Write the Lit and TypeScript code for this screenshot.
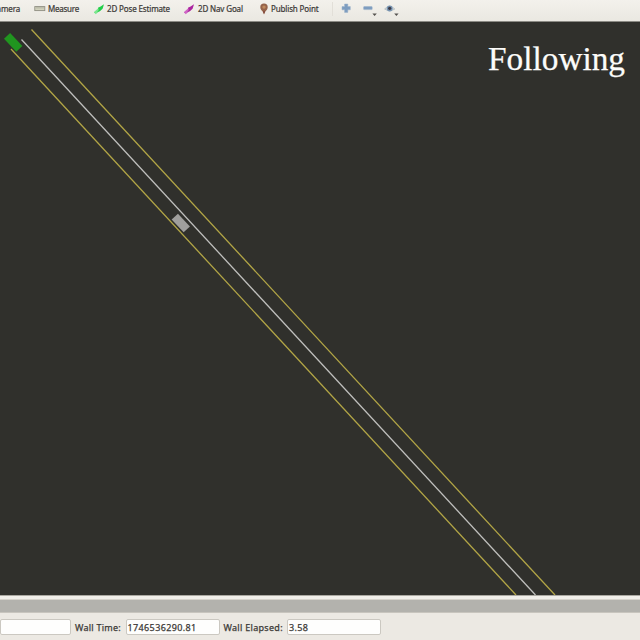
import { LitElement, html, css, svg } from "lit";
import { customElement } from "lit/decorators.js";

const arrow = (color: string, light: string) => html`<svg width="12" height="12" viewBox="0 0 12 12">
  <path d="M.8 10.2 L6 5.6" stroke=${light} stroke-width="2.8"/>
  <path d="M10 1.2 L8.6 5.8 L5.8 8.2 L3 9.2 L4.8 7 L4 4.8 L6.6 3.6 Z" fill=${color}/>
</svg>`;

const ruler = html`<svg width="12" height="12" viewBox="0 0 12 12">
  <rect x=".8" y="3.6" width="10" height="4" fill="#d2d3bd" stroke="#8f8e82" stroke-width=".9"/>
  <path d="M3 3.6v2M5 3.6v2M7 3.6v2M9 3.6v2" stroke="#96958a" stroke-width=".6"/>
</svg>`;

const pin = html`<svg width="9" height="12" viewBox="0 0 9 12">
  <path d="M4 11.5 L2.5 8.2 C.9 6.9 .3 5.7 .3 4.1 A3.7 3.7 0 0 1 7.7 4.1 C7.7 5.7 7.1 6.9 5.5 8.2 Z" fill="#95634a"/>
  <circle cx="4" cy="4.1" r="1.7" fill="#c08a5e"/>
  <path d="M3.2 8.2h1.6l-.8 2.9z" fill="#7c3936"/>
</svg>`;

@customElement("app-root")
export class AppRoot extends LitElement {
  static styles = css`
    :host {
      display: flex;
      flex-direction: column;
      width: 640px;
      height: 640px;
      overflow: hidden;
      background: #ece9e3;
      color: #3b3936;
      font-family: "Noto Sans", "Open Sans", sans-serif;
    }
    svg { display: block; flex: none; }
    .toolbar {
      display: flex;
      align-items: center;
      height: 22px;
      box-sizing: border-box;
      padding-bottom: 4px;
      flex: none;
      background: linear-gradient(#f3f1ec, #eae8e1);
      border-bottom: 1px solid #8b8a84;
      font-size: 8px;
      -webkit-text-stroke: 0.2px currentColor;
      white-space: nowrap;
    }
    .label { flex: none; line-height: 12px; letter-spacing: -0.14px; }
    .camera { display: flex; justify-content: flex-end; width: 20px; margin-right: 14px; }
    .measure { width: 46px; margin-left: 2px; letter-spacing: -0.25px; }
    .pose { width: 77px; margin-left: 1px; }
    .nav { width: 62px; margin-left: 2px; }
    .point { width: 61px; margin-left: 2px; }
    .divider { width: 1px; height: 14px; background: #e2dfd8; }
    .tools { display: flex; align-items: center; margin-left: 6px; }
    .view {
      position: relative;
      height: 573px;
      flex: none;
      background: #30302c;
      overflow: hidden;
    }
    .status {
      position: absolute;
      top: 15px;
      right: 15px;
      color: #fcfcfa;
      font: 33.3px/44px "Liberation Serif", serif;
      -webkit-text-stroke: 0.25px currentColor;
    }
    .edge { height: 5px; flex: none; background: linear-gradient(#aaa8a1 0 1px, #f0eee9 1px 4px, #d6d3cc 4px); }
    .dock { height: 13px; flex: none; background: #b3b2ad; border-bottom: 1px solid #c8c5be; box-sizing: border-box; }
    .time {
      display: flex;
      flex: none;
      padding-top: 6px;
      font-size: 9px;
      -webkit-text-stroke: 0.25px currentColor;
      line-height: 15px;
      white-space: nowrap;
    }
    .field {
      box-sizing: border-box;
      width: 94px;
      height: 16px;
      border: 1px solid #cbc8c1;
      border-radius: 2px;
      background: #fefefd;
      padding-left: 1px;
      line-height: 15px;
      letter-spacing: 0.38px;
    }
    .first { width: 71px; }
    .wall { width: 50.5px; padding-left: 4px; padding-top: 1px; letter-spacing: 0.25px; }
    .elapsed { width: 63.5px; padding-left: 4px; padding-top: 1px; letter-spacing: 0.3px; }
  `;

  render() {
    return html`
      <div class="toolbar">
        <div class="label camera">amera</div>
        ${ruler}<div class="label measure">Measure</div>
        ${arrow("#21ce48", "#7be68e")}<div class="label pose">2D Pose Estimate</div>
        ${arrow("#ab249f", "#cf66c5")}<div class="label nav">2D Nav Goal</div>
        ${pin}<div class="label point">Publish Point</div>
        <div class="divider"></div>
        <div class="tools">
          <svg width="70" height="17" viewBox="0 0 70 17">
            <path d="M3 6.6h2.6V4h3.2v2.6h2.5v3.2H8.8v2.6H5.6V9.8H3z" fill="#7d9dc0" stroke="#9ab0c9" stroke-width=".5"/>
            <rect x="24.6" y="6.6" width="8.6" height="3" rx=".5" fill="#7d9dc0" stroke="#9ab0c9" stroke-width=".5"/>
            <path d="M33.4 13.5h4.4l-2.2 2.6zM55.2 13.5h4.4l-2.2 2.6z" fill="#55534f"/>
            <path d="M45.6 9Q50.7 3.4 55.8 9Q50.7 12.6 45.6 9z" fill="#cbd6df" stroke="#aeb7b9" stroke-width=".7"/>
            <circle cx="50.7" cy="8.5" r="2.9" fill="#7793b1"/>
            <circle cx="50.7" cy="8.3" r="1.6" fill="#3a3b48"/>
          </svg>
        </div>
      </div>
      <div class="view">
        <svg width="640" height="573" viewBox="0 22 640 573">
          ${[
            ["M31.5 29.5L555 595", "#b3a646"],
            ["M21.5 39.5L535.5 595", "#c0c0be"],
            ["M11 49L516 595", "#b3a646"],
          ].map(([d, c]) => svg`<path d=${d} stroke=${c} stroke-width="1.3" fill="none"/>`)}
          <rect x="-9" y="-4.2" width="18" height="8.4" fill="#20951f" transform="translate(13.2 42.4) rotate(47)"/>
          <rect x="-8.8" y="-4.3" width="17.6" height="8.6" fill="#a09f9d" transform="translate(180.8 223) rotate(47)"/>
        </svg>
        <div class="status">Following</div>
      </div>
      <div class="edge"></div>
      <div class="dock"></div>
      <div class="time">
        <div class="field first"></div>
        <div class="wall">Wall Time:</div>
        <div class="field">1746536290.81</div>
        <div class="elapsed">Wall Elapsed:</div>
        <div class="field">3.58</div>
      </div>
    `;
  }
}
